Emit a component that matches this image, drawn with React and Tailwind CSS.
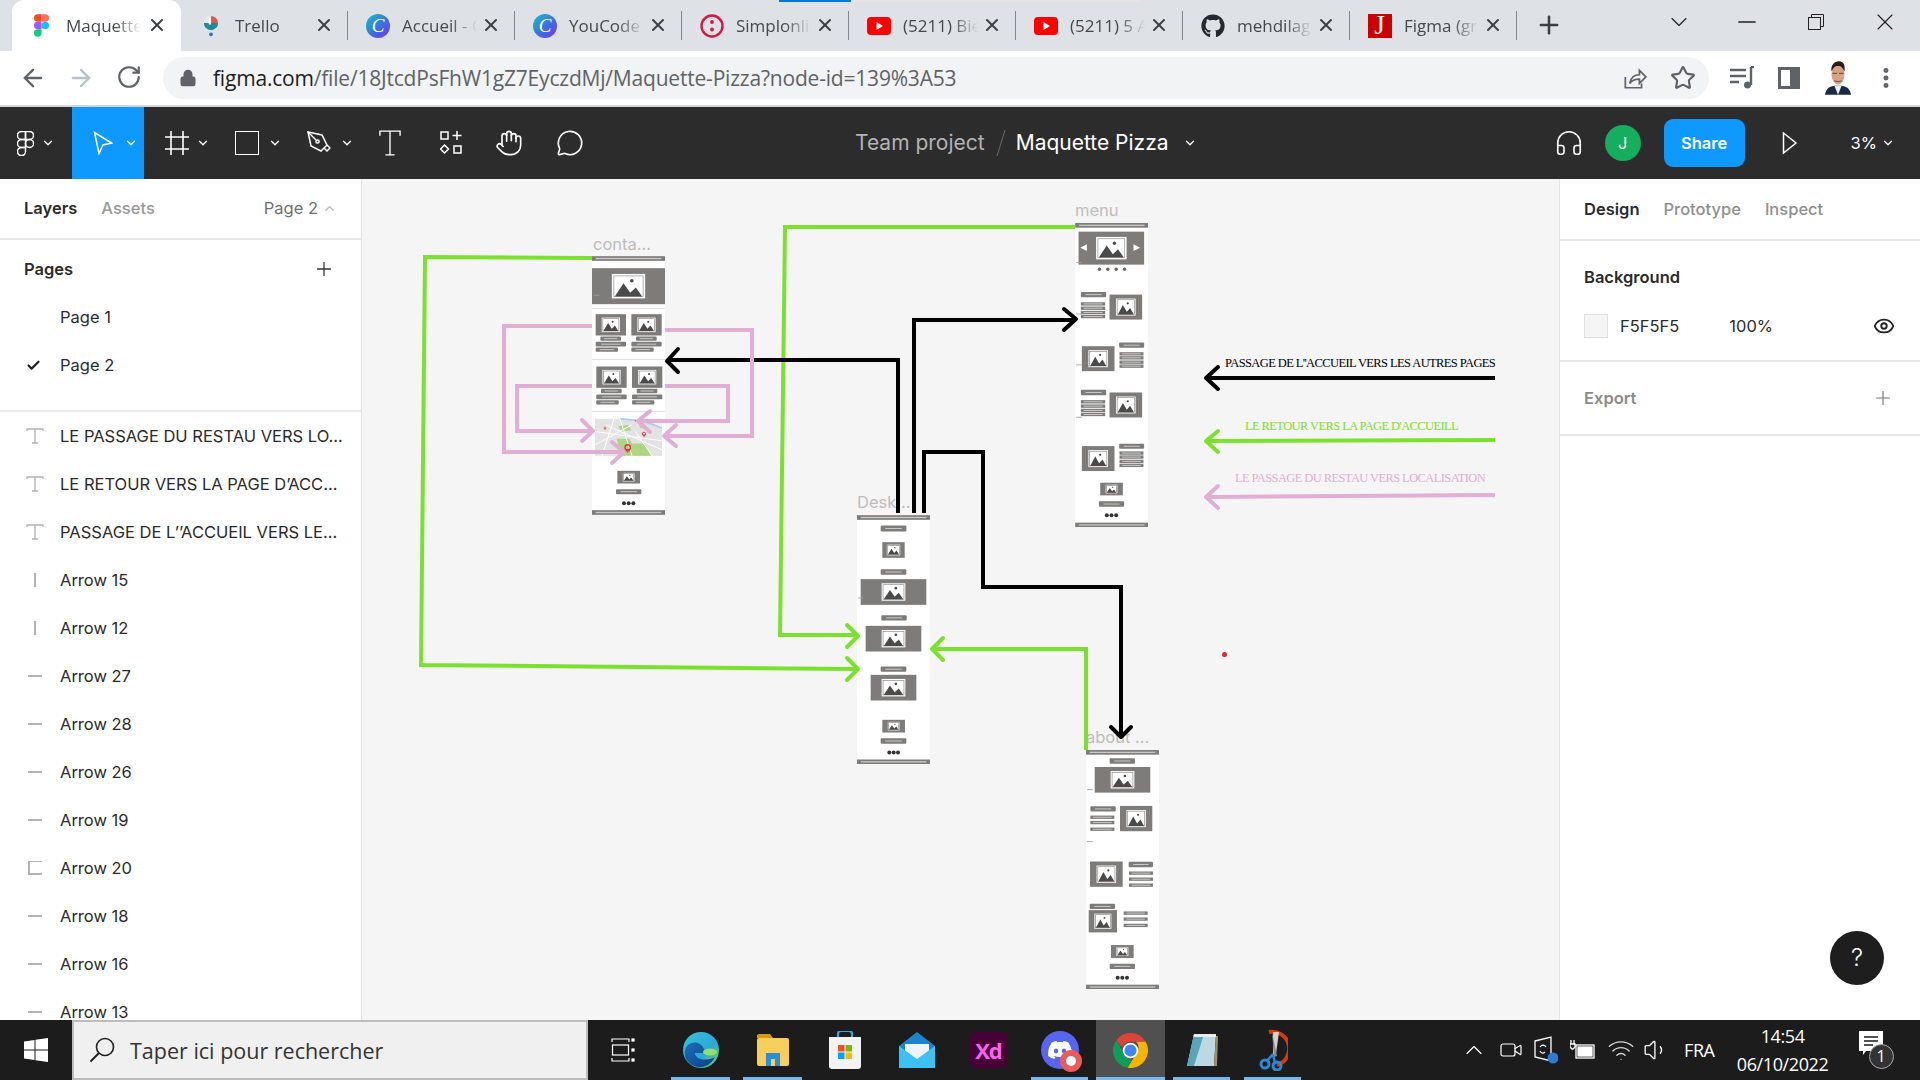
import { ArrowLeft, ArrowRight, RotateCw, Lock, Star, X, Plus, ChevronDown, ChevronUp, Minus, Headphones, Hand, MessageCircle, Check, Eye, Wifi, Volume1, EllipsisVertical, Video } from 'lucide-react';
import { FaGithub, FaDiscord } from 'react-icons/fa';

const GREY = '#7d7c7b';
const LINE = '#c9c9c9';
const GREEN = '#7ae22c';
const PINK = '#e2aed3';

const FigmaColor = () => (
  <svg viewBox="0 0 38 57" className="w-[15px] h-[23px]">
    <path fill="#1ABCFE" d="M19 28.5a9.5 9.5 0 1 1 19 0 9.5 9.5 0 0 1-19 0z" />
    <path fill="#0ACF83" d="M0 47.5A9.5 9.5 0 0 1 9.5 38H19v9.5a9.5 9.5 0 1 1-19 0z" />
    <path fill="#FF7262" d="M19 0v19h9.5a9.5 9.5 0 1 0 0-19H19z" />
    <path fill="#F24E1E" d="M0 9.5A9.5 9.5 0 0 0 9.5 19H19V0H9.5A9.5 9.5 0 0 0 0 9.5z" />
    <path fill="#A259FF" d="M0 28.5A9.5 9.5 0 0 0 9.5 38H19V19H9.5A9.5 9.5 0 0 0 0 28.5z" />
  </svg>
);

const TrelloIcon = () => (
  <svg viewBox="0 0 24 28" className="w-[18px] h-[24px]">
    <circle cx="12" cy="10" r="9.5" fill="#e4e9ea" />
    <path d="M12 .5a9.5 9.5 0 0 1 9.5 9.5H12z" fill="#e2574c" />
    <path d="M2.500 10a9.5 9.5 0 0 0 19 0z" fill="#1d8a99" />
    <rect x="9" y="3" width="3" height="9" fill="#fff" />
    <circle cx="12" cy="25" r="2.5" fill="#1a73e8" />
  </svg>
);

const CanvaIcon = ({ id }) => (
  <svg viewBox="0 0 24 24" className="w-[24px] h-[24px]">
    <defs>
      <linearGradient id={id} x1="0" y1="0" x2="1" y2="1">
        <stop offset="0" stopColor="#17c3c7" />
        <stop offset="0.55" stopColor="#3b6fe0" />
        <stop offset="1" stopColor="#7a2ff0" />
      </linearGradient>
    </defs>
    <circle cx="12" cy="12" r="12" fill={`url(#${id})`} />
    <text x="12" y="18" textAnchor="middle" fontFamily="Liberation Serif, serif" fontStyle="italic" fontSize="19" fill="#fff">C</text>
  </svg>
);

const SimplonIcon = () => (
  <svg viewBox="0 0 24 24" className="w-[24px] h-[24px]">
    <circle cx="12" cy="12" r="10.5" fill="none" stroke="#d8163f" strokeWidth="2.4" />
    <circle cx="12" cy="8" r="1.9" fill="#d8163f" />
    <circle cx="12" cy="15.5" r="1.9" fill="#d8163f" />
  </svg>
);

const YoutubeIcon = () => (
  <svg viewBox="0 0 24 18" className="w-[24px] h-[18px]">
    <rect width="24" height="18" rx="4" fill="#f00" />
    <path d="M9.5 5l6.5 4-6.5 4z" fill="#fff" />
  </svg>
);

const JIcon = () => (
  <div className="w-[24px] h-[24px] bg-[#cc0000] flex items-center justify-center text-white text-[27px] leading-none font-['Liberation_Serif',serif]">J</div>
);

const tabs = [
  { title: 'Maquette Pizza', icon: <FigmaColor />, active: true },
  { title: 'Trello', icon: <TrelloIcon /> },
  { title: 'Accueil - Canva', icon: <CanvaIcon id="canva1" /> },
  { title: 'YouCode - Canva', icon: <CanvaIcon id="canva2" /> },
  { title: 'Simplonline', icon: <SimplonIcon /> },
  { title: '(5211) Bien', icon: <YoutubeIcon /> },
  { title: '(5211) 5 Astuces', icon: <YoutubeIcon /> },
  { title: 'mehdilagdimi', icon: <FaGithub className="w-[24px] h-[24px] text-[#24292f]" /> },
  { title: 'Figma (gratuit)', icon: <JIcon /> },
];

const TabStrip = () => (
  <div className="relative h-[51px] bg-[#dee1e6] flex pl-[12px] shrink-0 font-['Open_Sans',sans-serif]">
    <div className="absolute left-[779px] top-0 w-[362px] h-[2px] bg-[#e4e4e4]" />
    <div className="absolute left-[779px] top-0 w-[72px] h-[2px] bg-[#0078d4]" />
    {tabs.map((tab) => (
      <div
        key={tab.title}
        className={tab.active ? 'relative w-[169px] h-full bg-white rounded-t-[12px] flex items-center' : 'relative w-[167px] h-full flex items-center'}
      >
        <div className="w-[60px] pr-[1px] flex justify-center shrink-0">{tab.icon}</div>
        <div className="w-[75px] -ml-[6px] overflow-hidden whitespace-nowrap text-[17px] text-[#45494e] [mask-image:linear-gradient(to_right,black_65%,transparent)]">{tab.title}</div>
        <X className="absolute right-[14px] top-[15px] w-[20px] h-[20px] text-[#3c4043]" strokeWidth={2.4} />
        {!tab.active && <div className="absolute right-0 top-[11px] h-[29px] w-[1px] bg-[#80868b]" />}
      </div>
    ))}
    <Plus className="absolute left-[1535px] top-[11px] w-[28px] h-[28px] text-[#3c4043]" strokeWidth={2.2} />
    <ChevronDown className="absolute left-[1665px] top-[8px] w-[28px] h-[28px] text-[#222]" strokeWidth={1} />
    <Minus className="absolute left-[1733px] top-[8px] w-[28px] h-[28px] text-[#222]" strokeWidth={1.2} />
    <svg viewBox="0 0 16 16" className="absolute left-[1808px] top-[14px] w-[16px] h-[16px]" fill="none" stroke="#222" strokeWidth="1">
      <rect x="0.5" y="3.5" width="12" height="12" />
      <path d="M3.5 3.5v-3h12v12h-3" />
    </svg>
    <X className="absolute left-[1871px] top-[8px] w-[28px] h-[28px] text-[#222]" strokeWidth={1} />
  </div>
);

const Avatar = () => (
  <svg viewBox="0 0 28 36" className="w-[26px] h-[36px]">
    <path d="M0 36c1-8 7-10 14-10s13 2 14 10z" fill="#1b2a44" />
    <path d="M10 26l4 10 4-10z" fill="#eef0f2" />
    <ellipse cx="14" cy="14" rx="7" ry="11" fill="#d9a184" />
    <path d="M7 11C6 4 10 0 15 0s7 4 6 11c-2-4-3-6-7-6s-5 2-7 6z" fill="#2a1c16" />
    <path d="M8 13h5M15 13h5" stroke="#5d4437" strokeWidth="1" />
    <path d="M10 21q4 2 8 0" stroke="#7a4b3c" strokeWidth="1" fill="none" />
  </svg>
);

const QueueIcon = () => (
  <svg viewBox="0 0 26 24" className="w-[26px] h-[24px]" fill="none" stroke="#5f6368" strokeWidth="2.400">
    <path d="M1 4h16M1 10h16M1 16h9" />
    <path d="M22 1v18" />
    <path d="M22 1h3" />
    <circle cx="18.500" cy="19" r="3.500" fill="#5f6368" stroke="none" />
  </svg>
);

const AddressBar = () => (
  <div className="relative h-[54px] bg-white flex items-center shrink-0">
    <div className="w-[163px] flex shrink-0">
      <ArrowLeft className="ml-[19px] w-[28px] h-[28px] text-[#5f6368]" strokeWidth={2} />
      <ArrowRight className="ml-[20px] w-[28px] h-[28px] text-[#bdc1c6]" strokeWidth={2} />
      <RotateCw className="ml-[21px] w-[26px] h-[26px] text-[#5f6368]" strokeWidth={2} />
    </div>
    <div className="w-[1546px] h-[42px] rounded-full bg-[#f1f3f4] flex items-center">
      <Lock className="ml-[16px] w-[18px] h-[18px] text-[#5f6368]" fill="#5f6368" strokeWidth={2} />
      <div className="ml-[16px] pt-[2px] text-[21px] whitespace-nowrap font-['Open_Sans',sans-serif] text-[#5f6368] tracking-[-0.2px]">
        <span className="text-[#202124]">figma.com</span>/file/18JtcdPsFhW1gZ7EyczdMj/Maquette-Pizza?node-id=139%3A53
      </div>
      <div className="flex-1" />
      <svg viewBox="0 0 24 24" className="w-[26px] h-[26px] mr-[23px]" fill="none" stroke="#5f6368" strokeWidth="1.6">
        <path d="M4 11v10h15v-4" />
        <path d="M8 17c1-5 4-8 9-8V5l6 6-6 6v-4c-4 0-7 1-9 4z" />
      </svg>
      <Star className="w-[26px] h-[26px] mr-[13px] text-[#5f6368]" strokeWidth={2} />
    </div>
    <div className="ml-[20px] flex"><QueueIcon /></div>
    <div className="ml-[23px] w-[22px] h-[22px] border-[3px] border-[#5f6368] flex justify-end"><div className="w-[7px] h-full bg-[#5f6368]" /></div>
    <div className="ml-[25px] flex"><Avatar /></div>
    <EllipsisVertical className="ml-[22px] w-[26px] h-[26px] text-[#5f6368]" strokeWidth={2.6} />
  </div>
);

const FigmaOutline = () => (
  <svg viewBox="-1 -1 40 59" className="w-[17px] h-[25px]" fill="none" stroke="#fff" strokeWidth="3.4">
    <path d="M19 28.5a9.5 9.5 0 1 1 19 0 9.5 9.5 0 0 1-19 0z" />
    <path d="M0 47.5A9.5 9.5 0 0 1 9.5 38H19v9.5a9.5 9.5 0 1 1-19 0z" />
    <path d="M19 0v19h9.5a9.5 9.5 0 1 0 0-19H19z" />
    <path d="M0 9.5A9.5 9.5 0 0 0 9.5 19H19V0H9.5A9.5 9.5 0 0 0 0 9.5z" />
    <path d="M0 28.5A9.5 9.5 0 0 0 9.5 38H19V19H9.5A9.5 9.5 0 0 0 0 28.5z" />
  </svg>
);

const Caret = () => <ChevronDown className="w-[14px] h-[14px] text-white" strokeWidth={2.2} />;

const PointerIcon = () => (
  <svg viewBox="0 0 20 24" className="w-[20px] h-[24px]" fill="none" stroke="#fff" strokeWidth="1.5">
    <path d="M1.5 1.5L18.5 12 10 14 6 22.5z" strokeLinejoin="miter" />
  </svg>
);
const FrameIcon = () => (
  <svg viewBox="0 0 24 24" className="w-[24px] h-[24px]" stroke="#fff" strokeWidth="1.6">
    <path d="M6 0v24M18 0v24M0 6h24M0 18h24" />
  </svg>
);
const RectIcon = () => <div className="w-[24px] h-[24px] border-[1.5px] border-white" />;
const PenIcon = () => (
  <svg viewBox="0 0 24 24" className="w-[24px] h-[24px]" fill="none" stroke="#fff" strokeWidth="1.5">
    <path d="M1 1l14 3 5 10-3 3-3 3-10-5z" />
    <path d="M1 1l8 8" />
    <circle cx="10.5" cy="10.5" r="1.6" />
    <path d="M17 17l3 3 3-3-3-3" />
  </svg>
);
const TextIcon = () => (
  <svg viewBox="0 0 24 28" className="w-[22px] h-[26px]" fill="none" stroke="#fff" strokeWidth="1.5">
    <path d="M1 6V1h22v5M12 1v26M7 27h10" />
  </svg>
);
const ComponentsIcon = () => (
  <svg viewBox="0 0 22 24" className="w-[22px] h-[24px]" fill="none" stroke="#fff" strokeWidth="1.5">
    <rect x="1" y="1" width="7" height="7" />
    <path d="M17 0v9M12.5 4.500h9" />
    <path d="M4.500 14l4 4-4 4-4-4z" />
    <rect x="14" y="15" width="7" height="7" />
  </svg>
);

const tools = [
  { w: 'w-[72px]', pl: 'pl-[17px] gap-[7px]', icon: <FigmaOutline />, caret: true },
  { w: 'w-[72px] bg-[#0d99ff]', pl: 'pl-[21px] gap-[11px]', icon: <PointerIcon />, caret: true },
  { w: 'w-[72px]', pl: 'pl-[21px] gap-[7px]', icon: <FrameIcon />, caret: true },
  { w: 'w-[72px]', pl: 'pl-[19px] gap-[9px]', icon: <RectIcon />, caret: true },
  { w: 'w-[72px]', pl: 'pl-[19px] gap-[9px]', icon: <PenIcon />, caret: true },
  { w: 'w-[60px]', pl: 'pl-[19px]', icon: <TextIcon /> },
  { w: 'w-[60px]', pl: 'pl-[20px]', icon: <ComponentsIcon /> },
  { w: 'w-[60px]', pl: 'pl-[15px]', icon: <Hand className="w-[28px] h-[30px] text-white" strokeWidth={1.4} /> },
  { w: 'w-[60px]', pl: 'pl-[16px]', icon: <MessageCircle className="w-[28px] h-[28px] text-white" strokeWidth={1.4} /> },
];

const FigmaToolbar = () => (
  <div className="h-[72px] bg-[#2c2c2c] flex items-stretch shrink-0 border-t-0">
    <div className="w-[855px] flex shrink-0">
      {tools.map((tool, i) => (
        <div key={i} className={`${tool.w} ${tool.pl} flex items-center`}>
          {tool.icon}
          {tool.caret && <Caret />}
        </div>
      ))}
    </div>
    <div className="flex items-center text-[21px] whitespace-nowrap">
      <span className="text-[#b3b3b3]">Team project</span>
      <svg viewBox="0 0 10 26" className="w-[10px] h-[26px] ml-[11px] mr-[10px]"><path d="M9 0L1 26" stroke="#6a6a6a" strokeWidth="1" /></svg>
      <span className="text-white">Maquette Pizza</span>
      <ChevronDown className="ml-[14px] w-[14px] h-[14px] text-white" strokeWidth={2.2} />
    </div>
    <div className="flex-1" />
    <div className="flex items-center">
      <Headphones className="w-[30px] h-[30px] text-white" strokeWidth={1.3} />
      <div className="ml-[21px] w-[36px] h-[36px] rounded-full bg-[#14ae5c] text-white text-[16.5px] flex items-center justify-center">J</div>
      <div className="ml-[23px] w-[81px] h-[48px] rounded-[9px] bg-[#0d99ff] text-white text-[16.5px] font-semibold flex items-center justify-center">Share</div>
      <svg viewBox="0 0 16 24" className="ml-[37px] w-[16px] h-[24px]" fill="none" stroke="#fff" strokeWidth="1.5"><path d="M1.500 2L14 12 1.500 22z" /></svg>
      <span className="ml-[53px] text-white text-[16.5px]">3%</span>
      <ChevronDown className="ml-[4px] mr-[25px] w-[14px] h-[14px] text-white" strokeWidth={2.2} />
    </div>
  </div>
);

const layers = [
  { name: 'LE PASSAGE DU RESTAU VERS LO...', kind: 'text' },
  { name: 'LE RETOUR VERS LA PAGE D\u2019ACC...', kind: 'text' },
  { name: 'PASSAGE DE L\u2019\u2019ACCUEIL VERS LE...', kind: 'text' },
  { name: 'Arrow 15', kind: 'v' },
  { name: 'Arrow 12', kind: 'v' },
  { name: 'Arrow 27', kind: 'h' },
  { name: 'Arrow 28', kind: 'h' },
  { name: 'Arrow 26', kind: 'h' },
  { name: 'Arrow 19', kind: 'h' },
  { name: 'Arrow 20', kind: 'elbow' },
  { name: 'Arrow 18', kind: 'h' },
  { name: 'Arrow 16', kind: 'h' },
  { name: 'Arrow 13', kind: 'h' },
];

const LayerIcon = ({ kind }) => {
  if (kind === 'text') {
    return (
      <svg viewBox="0 0 18 16" className="w-[18px] h-[16px]" fill="none" stroke="#b3b3b3" strokeWidth="1.3">
        <path d="M1 3V1h16v2M9 1v14M6 15h6" />
      </svg>
    );
  }
  if (kind === 'v') return <div className="w-[2px] h-[14px] bg-[#b3b3b3]" />;
  if (kind === 'h') return <div className="w-[14px] h-[2px] bg-[#b3b3b3]" />;
  return <div className="w-[14px] h-[14px] border-l-2 border-t border-b-2 border-[#b3b3b3]" />;
};

const LeftPanel = () => (
  <div className="w-[362px] shrink-0 bg-white border-r border-[#e5e5e5] overflow-hidden text-[16.5px] text-[#2b2b2b]">
    <div className="h-[61px] pl-[24px] pr-[24px] flex items-center border-b-2 border-[#e8e8e8]">
      <span className="font-semibold">Layers</span>
      <span className="ml-[24px] font-medium text-[#9a9a9a]">Assets</span>
      <span className="ml-auto text-[#707070]">Page 2</span>
      <ChevronUp className="ml-[4px] w-[15px] h-[15px] text-[#b3b3b3]" strokeWidth={2} />
    </div>
    <div className="h-[172px] pt-[5px] border-b-2 border-[#ebebeb]">
      <div className="h-[48px] pl-[24px] pr-[26px] flex items-center justify-between">
        <span className="font-semibold">Pages</span>
        <Plus className="w-[22px] h-[22px] text-[#333]" strokeWidth={1.4} />
      </div>
      <div className="h-[48px] pl-[60px] flex items-center">Page 1</div>
      <div className="h-[48px] pl-[26px] flex items-center">
        <Check className="w-[15px] h-[15px] text-[#222]" strokeWidth={3.4} />
        <span className="ml-[19px]">Page 2</span>
      </div>
    </div>
    {layers.map((layer) => (
      <div key={layer.name} className="h-[48px] flex items-center">
        <div className="w-[60px] pl-[26px] pr-[16px] flex justify-center shrink-0"><LayerIcon kind={layer.kind} /></div>
        <span className="whitespace-nowrap">{layer.name}</span>
      </div>
    ))}
  </div>
);

const Pic = ({ x, y, w, h }) => {
  const ih = h * 0.68;
  const iw = Math.min(ih * 1.36, w * 0.6);
  const ix = x + (w - iw) / 2;
  const iy = y + (h - ih) / 2;
  const pad = iw * 0.06;
  const bx = iy + ih - pad;
  return (
    <g>
      <rect x={x} y={y} width={w} height={h} fill={GREY} />
      <rect x={ix} y={iy} width={iw} height={ih} fill="#fff" />
      <rect x={ix + pad} y={iy + pad} width={iw - pad * 2} height={ih - pad * 2} fill="#fff" stroke="#8a8a8a" strokeWidth="2" />
      <path d={`M${ix + pad * 1.5} ${bx} L${ix + iw * 0.35} ${iy + ih * 0.38} L${ix + iw * 0.55} ${bx - ih * 0.15} L${ix + iw * 0.72} ${iy + ih * 0.55} L${ix + iw - pad * 1.5} ${bx} Z`} fill="#4a4a4a" />
      <circle cx={ix + iw * 0.6} cy={iy + ih * 0.28} r={iw * 0.055} fill="#4a4a4a" />
    </g>
  );
};

const Bar = ({ x, y, w, h = 15 }) => (
  <g>
    <rect x={x} y={y} width={w} height={h} rx="3" fill={GREY} />
    <rect x={x + w * 0.18} y={y + h / 2 - 1.5} width={w * 0.64} height="3" fill={LINE} />
  </g>
);

const Lines = ({ x, w, ys, h = 10 }) => ys.map((y) => (
  <g key={y}>
    <rect x={x} y={y} width={w} height={h} fill={GREY} />
    <rect x={x + 8} y={y + h / 2 - 1.5} width={w - 16} height="3" fill={LINE} />
  </g>
));

const Edge = ({ y }) => (
  <g>
    <rect x="0" y={y} width="219" height="14" fill={GREY} />
    <rect x="11" y={y + 5} width="197" height="4" fill={LINE} />
  </g>
);

const Dots = ({ xs, y, r = 6, fill = '#333' }) => xs.map((x) => <circle key={x} cx={x} cy={y} r={r} fill={fill} />);

const Rule = ({ y }) => <rect x="0" y={y} width="219" height="3" fill="#dedede" />;
const Dash = ({ y, x = 3 }) => <rect x={x} y={y} width="17" height="2.500" fill="#a0a0a0" />;

const Pin = ({ x, y, s }) => (
  <g>
    <circle cx={x} cy={y} r={s} fill="none" stroke="#ee2f36" strokeWidth={s * 0.55} />
    <path d={`M${x - s} ${y + s * 0.6} L${x} ${y + s * 2.1} L${x + s} ${y + s * 0.6} Z`} fill="#ee2f36" />
  </g>
);

const MapThumb = () => (
  <g transform="translate(0 376)">
    <rect x="9" y="112" width="201" height="111" fill="#e3e3e3" />
    <path d="M80 112c40 2 90 8 130 32v-32z" fill="#f5f5f5" />
    <path d="M84 112c40 2 90 10 126 28" fill="none" stroke="#a8d0ee" strokeWidth="5" />
    <path d="M78 134l30-4 10 16-28 4zM140 128l14 0 6 10-14 2zM74 172l38 0 8 14h38l20 37H88z" fill="#aed581" />
    <path d="M30 223L66 112M9 150L210 178M9 190L120 130M120 223L84 112M180 223L130 150M40 130L210 205" fill="none" stroke="#fff" strokeWidth="3" />
    <Pin x={39} y={139} s={3} />
    <Pin x={156} y={157} s={5} />
    <Pin x={107} y={198} s={8} />
    <circle cx="130" cy="118" r="2" fill="#ee2f36" />
  </g>
);

const ContactThumb = () => (
  <svg viewBox="0 0 219 776" className="block w-full h-full">
    <Edge y={0} />
    <Pic x={0} y={36} w={219} h={108} />
    <Dash y={116} x={5} />
    <Rule y={156} />
    <Pic x={11} y={174} w={91} h={64} />
    <Pic x={118} y={174} w={91} h={64} />
    <Bar x={25} y={241} w={62} h={13} />
    <Bar x={132} y={241} w={62} h={13} />
    <Bar x={11} y={257} w={91} h={14} />
    <Bar x={118} y={257} w={91} h={14} />
    <Bar x={11} y={274} w={67} h={13} />
    <Bar x={118} y={274} w={67} h={13} />
    <Rule y={308} />
    <Pic x={13} y={331} w={91} h={64} />
    <Pic x={120} y={331} w={91} h={64} />
    <Bar x={27} y={398} w={62} h={13} />
    <Bar x={134} y={398} w={62} h={13} />
    <Bar x={13} y={415} w={91} h={14} />
    <Bar x={120} y={415} w={91} h={14} />
    <Bar x={13} y={432} w={67} h={13} />
    <Bar x={120} y={432} w={67} h={13} />
    <Rule y={464} />
    <MapThumb />
    <Pic x={76} y={644} w={68} h={38} />
    <Bar x={72} y={699} w={76} />
    <Dots xs={[96, 110, 124]} y={741} />
    <Edge y={762} />
  </svg>
);

const DesktopThumb = () => (
  <svg viewBox="0 0 219 746" className="block w-full h-full">
    <Edge y={0} />
    <Bar x={71} y={31} w={77} h={18} />
    <Pic x={76} y={81} w={67} h={47} />
    <Bar x={71} y={162} w={77} h={17} />
    <Pic x={11} y={192} w={197} h={77} />
    <Dash y={247} x={3} />
    <Bar x={73} y={300} w={76} h={16} />
    <Pic x={26} y={332} w={167} h={77} />
    <Bar x={71} y={454} w={77} h={16} />
    <Pic x={41} y={479} w={137} h={77} />
    <Pic x={76} y={614} w={68} h={38} />
    <Bar x={71} y={669} w={77} h={17} />
    <Dots xs={[97, 110, 123]} y={712} />
    <Edge y={733} />
  </svg>
);

const MenuThumb = () => (
  <svg viewBox="0 0 218 913" className="block w-full h-full">
    <Edge y={0} />
    <Pic x={10} y={26} w={197} h={99} />
    <path d="M15 74l20-10v20zM175 64l20 10-20 10z" fill="#fff" />
    <Dots xs={[73, 98, 123, 148]} y={139} r={5} fill="#666" />
    <Dash y={117} x={3} />
    <Bar x={17} y={207} w={76} h={16} />
    <Lines x={17} w={73} ys={[238, 251, 264, 276]} />
    <Pic x={103} y={215} w={98} h={75} />
    <Dash y={272} x={3} />
    <Pic x={20} y={370} w={98} h={75} />
    <Bar x={132} y={359} w={75} h={16} />
    <Lines x={133} w={72} ys={[388, 400, 413, 425]} />
    <Dash y={425} x={3} />
    <Bar x={17} y={501} w={76} h={16} />
    <Lines x={17} w={73} ys={[532, 545, 558, 570]} />
    <Pic x={103} y={509} w={98} h={75} />
    <Dash y={582} x={3} />
    <Pic x={20} y={670} w={98} h={75} />
    <Bar x={132} y={663} w={75} h={15} />
    <Lines x={133} w={72} ys={[686, 698, 711, 723]} />
    <Pic x={75} y={780} w={68} h={38} />
    <Bar x={71} y={836} w={76} h={16} />
    <Dots xs={[95, 109, 123]} y={878} />
    <Edge y={900} />
  </svg>
);

const AboutThumb = () => (
  <svg viewBox="0 0 219 718" className="block w-full h-full">
    <Edge y={0} />
    <Bar x={71} y={25} w={76} h={16} />
    <Pic x={26} y={51} w={167} h={77} />
    <Dash y={118} x={3} />
    <Bar x={13} y={169} w={76} h={16} />
    <Lines x={13} w={72} ys={[197, 213, 233]} />
    <Pic x={102} y={168} w={97} h={76} />
    <Dash y={274} x={3} />
    <Pic x={12} y={335} w={98} h={76} />
    <Bar x={128} y={336} w={73} h={16} />
    <Lines x={129} w={72} ys={[365, 383, 401]} />
    <Bar x={11} y={462} w={76} h={16} />
    <Pic x={8} y={481} w={85} h={67} />
    <Lines x={113} w={72} ys={[485, 503, 522]} />
    <Pic x={75} y={586} w={68} h={39} />
    <Bar x={71} y={642} w={76} h={16} />
    <Dots xs={[95, 109, 123]} y={684} />
    <Edge y={705} />
  </svg>
);

const Arrow = ({ d, head, color, width = 4 }) => (
  <g fill="none" stroke={color} strokeWidth={width}>
    <path d={d} strokeLinejoin="miter" />
    <path d={head} strokeLinecap="round" strokeLinejoin="round" />
  </g>
);

const Arrows = () => (
  <svg viewBox="362 179 1197 841" className="absolute inset-0 w-full h-full pointer-events-none">
    <Arrow color={GREEN} d="M592 258L425 257L421 665L856 669" head="M847 658L858 669L847 680" />
    <Arrow color={GREEN} d="M1075 227H785L780 635H856" head="M847 625L858 636L847 647" />
    <Arrow color={GREEN} d="M1086 750V649H934" head="M943 638L932 649L943 660" />

    <Arrow color="#000" d="M898 513V360H669" head="M678 349L667 361L678 372" />
    <Arrow color="#000" d="M914 513V320H1074" head="M1064 309L1076 319L1064 330" />
    <Arrow color="#000" d="M924 513V452H983V587H1121V735" head="M1111 727L1121 737L1131 727" />

    <Arrow color={PINK} d="M592 326H504V452H623" head="M612 442L624 452L612 463" />
    <Arrow color={PINK} d="M592 386H517V431H592" head="M582 420L593 431L582 441" />
    <Arrow color={PINK} d="M665 386H728V421H640" head="M650 411L638 421L650 432" />
    <Arrow color={PINK} d="M665 330H752V436H666" head="M676 425L664 436L676 446" />

    <Arrow color="#000" d="M1495 378H1208" head="M1218 367L1206 378L1218 389" />
    <Arrow color={GREEN} d="M1495 440L1208 441" head="M1218 431L1206 441L1218 452" />
    <Arrow color={PINK} d="M1495 495L1208 497" head="M1218 486L1206 497L1218 508" />
  </svg>
);

const Canvas = () => (
  <div className="relative flex-1 bg-[#f5f5f5] overflow-hidden">
    <div className="absolute left-[231px] top-[56px] text-[16.5px] text-[#bdbdbd] leading-[18px]">conta...</div>
    <div className="absolute left-[230px] top-[77px] w-[73px] h-[259px] bg-white"><ContactThumb /></div>

    <div className="absolute left-[495px] top-[314px] text-[16.5px] text-[#bdbdbd] leading-[18px]">Desk...</div>
    <div className="absolute left-[495px] top-[336px] w-[73px] h-[249px] bg-white"><DesktopThumb /></div>

    <div className="absolute left-[713px] top-[22px] text-[16.5px] text-[#bdbdbd] leading-[18px]">menu</div>
    <div className="absolute left-[713px] top-[44px] w-[73px] h-[304px] bg-white"><MenuThumb /></div>

    <div className="absolute left-[724px] top-[549px] text-[16.5px] text-[#bdbdbd] leading-[18px]">about ...</div>
    <div className="absolute left-[724px] top-[571px] w-[73px] h-[239px] bg-white"><AboutThumb /></div>

    <Arrows />

    <div className="absolute left-[863px] top-[175px] text-[12.5px] tracking-[-0.6px] leading-[18px] whitespace-nowrap text-black font-['Liberation_Serif',serif]">PASSAGE DE L''ACCUEIL VERS LES AUTRES PAGES</div>
    <div className="absolute left-[883px] top-[238px] text-[12.5px] tracking-[-0.6px] leading-[18px] whitespace-nowrap text-[#7ae22c] font-['Liberation_Serif',serif]">LE RETOUR VERS LA PAGE D'ACCUEILL</div>
    <div className="absolute left-[873px] top-[290px] text-[12.5px] tracking-[-0.6px] leading-[18px] whitespace-nowrap text-[#e2aed3] font-['Liberation_Serif',serif]">LE PASSAGE DU RESTAU VERS LOCALISATION</div>

    <div className="absolute left-[860px] top-[473px] w-[5px] h-[5px] rounded-full bg-[#e3242b]" />
  </div>
);

const RightPanel = () => (
  <div className="w-[361px] shrink-0 bg-white border-l border-[#e5e5e5] text-[16.5px] text-[#2b2b2b]">
    <div className="h-[62px] pl-[24px] flex items-center border-b-2 border-[#e8e8e8]">
      <span className="font-semibold">Design</span>
      <span className="ml-[24px] font-medium text-[#8f8f8f]">Prototype</span>
      <span className="ml-[24px] font-medium text-[#8f8f8f]">Inspect</span>
    </div>
    <div className="h-[121px] border-b-2 border-[#e8e8e8] pl-[24px] pr-[25px]">
      <div className="h-[73px] flex items-center font-semibold">Background</div>
      <div className="flex items-center">
        <div className="w-[24px] h-[24px] bg-[#f5f5f5] border border-[#e2e2e2]" />
        <span className="ml-[12px]">F5F5F5</span>
        <span className="ml-[50px]">100%</span>
        <Eye className="ml-auto w-[22px] h-[22px] text-[#222]" strokeWidth={2} />
      </div>
    </div>
    <div className="h-[74px] border-b-2 border-[#e8e8e8] pl-[24px] pr-[26px] flex items-center justify-between">
      <span className="font-semibold text-[#8c8c8c]">Export</span>
      <Plus className="w-[22px] h-[22px] text-[#777]" strokeWidth={1.3} />
    </div>
  </div>
);

const WindowsLogo = () => (
  <svg viewBox="0 0 24 24" className="w-[24px] h-[24px]" fill="#fff">
    <path d="M0 3.400L10.500 2v9.500H0zM11.500 1.800L24 0v11.500H11.500zM0 12.500h10.500V22L0 20.600zM11.500 12.500H24V24l-12.500-1.800z" />
  </svg>
);

const SearchGlyph = () => (
  <svg viewBox="0 0 26 26" className="w-[26px] h-[26px]" fill="none" stroke="#222" strokeWidth="1.600">
    <circle cx="16" cy="10" r="8.500" />
    <path d="M10 16L1.500 24.500" strokeWidth="2" />
  </svg>
);

const TaskView = () => (
  <svg viewBox="0 0 24 24" className="w-[24px] h-[24px]" fill="none" stroke="#fff" strokeWidth="1.2">
    <path d="M1 4V1h17v3M1 20v3h17v-3" />
    <rect x="1.500" y="7" width="16" height="10" />
    <rect x="21" y="1" width="2" height="2" fill="#fff" />
    <rect x="21" y="11" width="2" height="2" fill="#fff" />
    <rect x="21" y="21" width="2" height="2" fill="#fff" />
  </svg>
);

const EdgeIcon = () => (
  <svg viewBox="0 0 36 36" className="w-[36px] h-[36px]">
    <defs>
      <linearGradient id="edgeA" x1="0" y1="0" x2="1" y2="1">
        <stop offset="0" stopColor="#36c4d8" />
        <stop offset="0.6" stopColor="#2aa8d8" />
        <stop offset="1" stopColor="#7ed957" />
      </linearGradient>
      <linearGradient id="edgeB" x1="0" y1="0" x2="1" y2="1">
        <stop offset="0" stopColor="#1a6fb8" />
        <stop offset="1" stopColor="#0c3f86" />
      </linearGradient>
    </defs>
    <circle cx="18" cy="18" r="18" fill="url(#edgeA)" />
    <path d="M2 24C0 13 9 9 15 11c5 2 7 7 7 10H12c0 6 10 9 20 4-4 8-11 11-17 10C8 34 3 29 2 24z" fill="url(#edgeB)" />
    <ellipse cx="27" cy="20" rx="7" ry="3.500" fill="#8fe06a" />
  </svg>
);

const FolderIcon = () => (
  <svg viewBox="0 0 32 34" className="w-[32px] h-[34px]">
    <path d="M0 3a2 2 0 0 1 2-2h11l3 4H0z" fill="#d99a12" />
    <rect y="5" width="32" height="28" rx="2" fill="#f8cf5b" />
    <path d="M9 33V20h14v13h-5v-7h-4v7z" fill="#2a8fd8" />
  </svg>
);

const StoreIcon = () => (
  <svg viewBox="0 0 34 38" className="w-[34px] h-[38px]">
    <path d="M10 7V3a3 3 0 0 1 3-3h8a3 3 0 0 1 3 3v4" fill="none" stroke="#2aa8e0" strokeWidth="2.200" />
    <path d="M1 6h32v29a3 3 0 0 1-3 3H4a3 3 0 0 1-3-3z" fill="#f3f3f3" />
    <rect x="10" y="14" width="6.500" height="6.500" fill="#f25022" />
    <rect x="17.500" y="14" width="6.500" height="6.500" fill="#7fba00" />
    <rect x="10" y="21.500" width="6.500" height="6.500" fill="#00a4ef" />
    <rect x="17.500" y="21.500" width="6.500" height="6.500" fill="#ffb900" />
  </svg>
);

const MailIcon = () => (
  <svg viewBox="0 0 36 36" className="w-[36px] h-[36px]">
    <path d="M18 0L36 14v22H0V14z" fill="#1b84cf" />
    <path d="M6 12h24v8L18 28 6 20z" fill="#eef3f7" />
    <path d="M0 14l18 13 18-13v22H0z" fill="#3dc1f2" />
  </svg>
);

const XdIcon = () => (
  <div className="w-[37px] h-[36px] rounded-[5px] bg-[#470137] text-[#ff61f6] text-[22px] font-bold flex items-center justify-center font-['Open_Sans',sans-serif] tracking-[-1px]">Xd</div>
);

const DiscordIcon = () => (
  <div className="relative w-[38px] h-[38px] rounded-full bg-[#5865f2] flex items-center justify-center">
    <FaDiscord className="w-[26px] h-[26px] text-white" />
    <div className="absolute -right-[3px] -bottom-[3px] w-[22px] h-[22px] rounded-full bg-[#ec5b5b] flex items-center justify-center"><div className="w-[10px] h-[10px] rounded-full bg-white" /></div>
  </div>
);

const ChromeIcon = () => (
  <svg viewBox="0 0 36 36" className="w-[35px] h-[35px]">
    <path d="M18 0a18 18 0 0 1 15.600 9H18a9 9 0 0 0-8.500 6L3.500 7.400A18 18 0 0 1 18 0z" fill="#db4437" />
    <path d="M3.500 7.400L9.800 18a9 9 0 0 0 10 8.800l-5 9A18 18 0 0 1 3.500 7.400z" fill="#0f9d58" />
    <path d="M33.600 9A18 18 0 0 1 15 35.800L24 21a9 9 0 0 0 0-12z" fill="#f4b400" />
    <circle cx="18" cy="18" r="8" fill="#fff" />
    <circle cx="18" cy="18" r="6.200" fill="#4285f4" />
  </svg>
);

const NotepadIcon = () => (
  <svg viewBox="0 0 32 36" className="w-[32px] h-[36px]">
    <path d="M8 2h22l-2 32H1z" fill="#bcd9e2" />
    <path d="M8 2h10L8 34H1z" fill="#5ba5b8" />
    <path d="M28 34h3l1-30h-2z" fill="#9c8e6a" />
    <path d="M8 2h22v3H7.500z" fill="#e6edf0" />
  </svg>
);

const SnipIcon = () => (
  <svg viewBox="0 0 30 42" className="w-[30px] h-[42px]">
    <path d="M11 3a17 17 0 0 1 8 33" fill="none" stroke="#d83b01" strokeWidth="4" />
    <path d="M15 3h6l-3 22-3 2z" fill="#d0d0d0" />
    <path d="M14 3l5 24-3 1z" fill="#8a8a8a" />
    <circle cx="7" cy="35" r="4" fill="none" stroke="#2b88d8" strokeWidth="3" />
    <circle cx="19" cy="37" r="4" fill="none" stroke="#2b88d8" strokeWidth="3" />
    <path d="M9 32l6-7M17 34l-2-9" stroke="#2b88d8" strokeWidth="2.500" />
  </svg>
);

const apps = [
  { left: 'w-[59px]', icon: <EdgeIcon />, on: true },
  { left: 'w-[59px] ml-[13px]', icon: <FolderIcon />, on: true },
  { left: 'w-[59px] ml-[13px]', icon: <StoreIcon /> },
  { left: 'w-[59px] ml-[13px]', icon: <MailIcon /> },
  { left: 'w-[59px] ml-[13px]', icon: <XdIcon /> },
  { left: 'w-[57px] ml-[13px]', icon: <DiscordIcon />, on: true },
  { left: 'w-[69px] ml-[8px] bg-[#505050]', icon: <ChromeIcon />, on: true },
  { left: 'w-[57px] ml-[8px]', icon: <NotepadIcon />, on: true },
  { left: 'w-[57px] ml-[14px]', icon: <SnipIcon />, on: true },
];

const Taskbar = () => (
  <div className="h-[60px] bg-[#1c1c1c] flex items-stretch shrink-0 text-white font-['Open_Sans',sans-serif]">
    <div className="w-[72px] flex items-center justify-center"><WindowsLogo /></div>
    <div className="w-[516px] bg-[#f0f0f0] border-2 border-[#bdbdbd] flex items-center">
      <div className="ml-[15px] flex"><SearchGlyph /></div>
      <span className="ml-[15px] pt-[3px] text-[21.5px] text-[#333] whitespace-nowrap">Taper ici pour rechercher</span>
    </div>
    <div className="w-[83px] pl-[23px] flex items-center"><TaskView /></div>
    {apps.map((app, i) => (
      <div key={i} className={`relative ${app.left} flex items-center justify-center`}>
        {app.icon}
        {app.on && <div className="absolute left-0 right-0 bottom-0 h-[3px] bg-[#76b9ed]" />}
      </div>
    ))}
    <div className="flex-1" />
    <div className="flex items-center w-[461px] shrink-0 pl-[1px]">
      <ChevronUp className="w-[28px] h-[28px]" strokeWidth={1} />
      <Video className="ml-[11px] w-[24px] h-[24px]" strokeWidth={1.2} />
      <svg viewBox="0 0 24 28" className="ml-[11px] w-[24px] h-[28px]" fill="none" stroke="#fff" strokeWidth="1.3">
        <path d="M1 5l16-4v24L1 21z" />
        <path d="M6 11c2-3 5-2 6 0M11 16c-2 2-4 1-5-1" />
        <circle cx="19" cy="22" r="5.500" fill="#2b7cd3" stroke="none" />
      </svg>
      <svg viewBox="0 0 26 20" className="ml-[12px] w-[26px] h-[20px]" fill="none" stroke="#fff" strokeWidth="1.3">
        <rect x="6" y="5" width="18" height="13" />
        <rect x="8" y="7" width="14" height="9" fill="#fff" />
        <path d="M1 0v4M4 0v4M0 4h5v3l-2 2H2L0 7z" />
      </svg>
      <Wifi className="ml-[11px] w-[28px] h-[28px] text-[#d5d5d5]" strokeWidth={1.2} />
      <Volume1 className="ml-[8px] w-[26px] h-[26px]" strokeWidth={1.2} />
      <span className="ml-[15px] text-[18px] tracking-[-0.4px]">FRA</span>
      <div className="ml-[20px] w-[96px] flex flex-col items-center text-[18px] leading-[28px] tracking-[-0.4px] whitespace-nowrap">
        <span>14:54</span>
        <span>06/10/2022</span>
      </div>
      <div className="relative ml-[28px] w-[30px] h-[44px]">
        <svg viewBox="0 0 24 24" className="absolute left-0 top-[2px] w-[24px] h-[26px]" fill="#fff">
          <path d="M0 0h24v20H7l-3 4v-4H0z" />
          <path d="M5 6h14M5 10h14M5 14h9" stroke="#1c1c1c" strokeWidth="1.500" />
        </svg>
        <div className="absolute left-[10px] top-[16px] w-[25px] h-[25px] rounded-full bg-[#333] border border-[#aaa] text-[16px] leading-[22px] text-center">1</div>
      </div>
    </div>
  </div>
);

export default function App() {
  return (
    <div className="w-[1920px] h-[1080px] overflow-hidden flex flex-col font-['Inter',sans-serif]">
      <TabStrip />
      <AddressBar />
      <div className="h-[2px] bg-[#d6d6d6] shrink-0" />
      <FigmaToolbar />
      <div className="relative flex-1 flex min-h-0">
        <LeftPanel />
        <Canvas />
        <RightPanel />
        <div className="absolute right-[36px] bottom-[35px] w-[54px] h-[54px] rounded-full bg-[#1e1e1e] text-white text-[24px] font-light flex items-center justify-center">?</div>
      </div>
      <Taskbar />
    </div>
  );
}
